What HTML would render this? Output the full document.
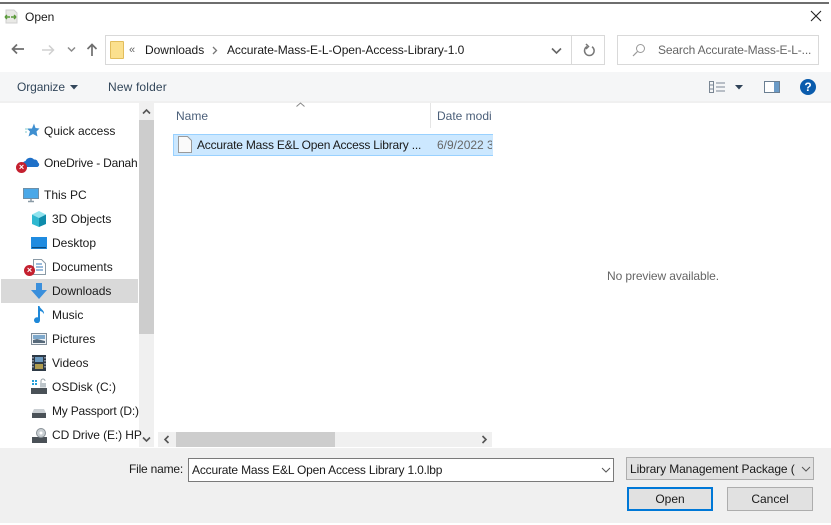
<!DOCTYPE html>
<html><head><meta charset="utf-8"><style>
html,body{margin:0;padding:0;background:#fff}
#r{position:relative;width:831px;height:525px;overflow:hidden;background:#fff;font-family:"Liberation Sans",sans-serif;font-size:12px;color:#1a1a1a}
#r div,#r svg{position:absolute}
.t{white-space:nowrap;line-height:16px;height:16px}
</style></head><body><div id="r">
<div style="left:0;top:2px;width:829px;height:2px;background:#6e6e6e"></div>
<svg style="left:3px;top:8px" width="16" height="17" viewBox="0 0 16 17"><path d="M3 2h8l3 3v10H3z" fill="#e9e9e6" stroke="#cfcfcf"/><path d="M2 9h5M2 9l2-2M2 9l2 2" stroke="#5a9a3a" stroke-width="1.4" fill="none"/><path d="M13 9H8M13 9l-2-2M13 9l-2 2" stroke="#5a9a3a" stroke-width="1.4" fill="none"/></svg>
<div class="t" style="left:25px;top:9px">Open</div>
<svg style="left:810px;top:10px" width="12" height="12" viewBox="0 0 12 12"><path d="M1 1l10 10M11 1L1 11" stroke="#222" stroke-width="1.1" fill="none"/></svg>

<svg style="left:11px;top:42px" width="14" height="14" viewBox="0 0 14 14"><path d="M13 7H2M6 2.500L1.500 7L6 11.500" stroke="#6e6e6e" stroke-width="1.700" fill="none"/></svg>
<svg style="left:41px;top:43px" width="14" height="14" viewBox="0 0 14 14"><path d="M1 7h11M8 2.500L12.500 7L8 11.500" stroke="#d0d0d0" stroke-width="1.500" fill="none"/></svg>
<svg style="left:67px;top:46px" width="9" height="7" viewBox="0 0 9 7"><path d="M1 1.500L4.500 5L8 1.500" stroke="#8a8a8a" stroke-width="1.500" fill="none"/></svg>
<svg style="left:85px;top:43px" width="14" height="14" viewBox="0 0 14 14"><path d="M7 13V2M2.500 6L7 1.500L11.500 6" stroke="#6e6e6e" stroke-width="1.700" fill="none"/></svg>

<div style="left:105px;top:35px;width:498px;height:28px;border:1px solid #d9d9d9"></div>
<div style="left:571px;top:36px;width:1px;height:28px;background:#d9d9d9"></div>
<div style="left:110px;top:41px;width:12px;height:16px;background:#fbe08e;border:1px solid #e2bd5c;border-radius:1px"></div>
<div class="t" style="left:129px;top:42px;color:#666;font-size:11px">«</div>
<div class="t" style="left:145px;top:42px;letter-spacing:-.02px">Downloads</div>
<svg style="left:212px;top:46px" width="6" height="9" viewBox="0 0 6 9"><path d="M1 1l3.500 3.500L1 8" stroke="#777" stroke-width="1.300" fill="none"/></svg>
<div class="t" style="left:227px;top:42px;letter-spacing:-.07px">Accurate-Mass-E-L-Open-Access-Library-1.0</div>
<svg style="left:551px;top:47px" width="11" height="8" viewBox="0 0 11 8"><path d="M1 1.500L5.500 6L10 1.500" stroke="#666" stroke-width="1.600" fill="none"/></svg>
<svg style="left:583px;top:43px" width="13" height="15" viewBox="0 0 13 15"><path d="M4 3.500a4.800 4.800 0 1 0 5 .2M3 1l2.500 2.500L3 6" stroke="#777" stroke-width="1.500" fill="none"/></svg>

<div style="left:617px;top:35px;width:200px;height:28px;border:1px solid #d9d9d9"></div>
<svg style="left:632px;top:43px" width="14" height="14" viewBox="0 0 14 14"><circle cx="8.500" cy="5.500" r="4" stroke="#999" fill="none"/><path d="M5.500 8.500L1 13" stroke="#999" stroke-width="1.200"/></svg>
<div class="t" style="left:658px;top:42px;color:#666;letter-spacing:-.15px">Search Accurate-Mass-E-L-...</div>

<div style="left:0;top:72px;width:831px;height:29px;background:#f5f6f7"></div>
<div style="left:0;top:101px;width:831px;height:2px;background:#f0f0f0"></div>
<div class="t" style="left:17px;top:79px;color:#33475b;letter-spacing:-.1px">Organize</div>
<svg style="left:70px;top:85px" width="8" height="5" viewBox="0 0 8 5"><path d="M0 0h8L4 4.500z" fill="#33475b"/></svg>
<div class="t" style="left:108px;top:79px;color:#33475b;letter-spacing:.15px">New folder</div>
<svg style="left:709px;top:81px" width="17" height="12" viewBox="0 0 17 12"><path d="M.5.500h4v11h-4zM.5 4h4M.5 8h4M7 2h9M7 6h9M7 10h9" stroke="#7b8794" fill="none"/></svg>
<svg style="left:735px;top:85px" width="8" height="5" viewBox="0 0 8 5"><path d="M0 0h8L4 4.500z" fill="#2f4358"/></svg>
<svg style="left:764px;top:81px" width="16" height="12" viewBox="0 0 16 12"><rect x=".5" y=".5" width="15" height="11" fill="#fff" stroke="#6b7f92"/><rect x="10" y="1" width="5" height="10" fill="#6b9bc7"/></svg>
<div style="left:800px;top:79px;width:16px;height:16px;border-radius:50%;background:#0b5cad;color:#fff;font:bold 12px/16px 'Liberation Sans',sans-serif;text-align:center">?</div>

<!-- sidebar -->
<div style="left:1px;top:279px;width:137px;height:24px;background:#d9d9d9"></div>
<div style="left:139px;top:103px;width:15px;height:344px;background:#f0f0f0"></div>
<div style="left:139px;top:120px;width:15px;height:214px;background:#cdcdcd"></div>
<svg style="left:142px;top:108px" width="9" height="7" viewBox="0 0 9 7"><path d="M1 5.500L4.500 2L8 5.500" stroke="#555" stroke-width="1.600" fill="none"/></svg>
<svg style="left:142px;top:436px" width="9" height="7" viewBox="0 0 9 7"><path d="M1 1.500L4.500 5L8 1.500" stroke="#555" stroke-width="1.600" fill="none"/></svg>

<svg style="left:25px;top:123px" width="15" height="15" viewBox="0 0 15 15"><path d="M9 .5l1.500 4.500 4 .5-3 3 1 5-4.500-2.500-4.500 2.500 1.500-5-3-3h5z" fill="#3f8fd0"/><path d="M0 6h3M0 9h2" stroke="#8cc" /></svg>
<div class="t" style="left:44px;top:123px">Quick access</div>

<svg style="left:23px;top:156px" width="17" height="12" viewBox="0 0 17 12"><path d="M3 11a3 3 0 0 1-.500-6A5 5 0 0 1 11 3.500a3.500 3.500 0 0 1 4 3A2.500 2.500 0 0 1 14.500 11z" fill="#1e70c8"/></svg>
<div style="left:16px;top:162px;width:11px;height:11px;border-radius:50%;background:#c4202f;color:#fff;font:bold 9px/10px 'Liberation Sans',sans-serif;text-align:center">×</div>
<div class="t" style="left:44px;top:155px;letter-spacing:-.2px">OneDrive - Danah</div>

<svg style="left:23px;top:188px" width="16" height="15" viewBox="0 0 16 15"><rect x=".5" y=".5" width="15" height="10" fill="#4aa8e8" stroke="#6d8fa8"/><path d="M5 13.500h6M8 11v2" stroke="#8a9aa6" stroke-width="1.500"/></svg>
<div class="t" style="left:44px;top:187px">This PC</div>

<svg style="left:31px;top:211px" width="16" height="16" viewBox="0 0 16 16"><path d="M8 0l7 3.500-7 3.500-7-3.500z" fill="#8fe3ee"/><path d="M1 3.500L8 7v9l-7-3z" fill="#2fb8d0"/><path d="M15 3.500L8 7v9l7-3z" fill="#0f8cab"/></svg>
<div class="t" style="left:52px;top:211px">3D Objects</div>

<svg style="left:31px;top:237px" width="16" height="12" viewBox="0 0 16 12"><rect width="16" height="12" fill="#1f8be0"/><rect x="1" y="10" width="14" height="1.200" fill="#0c4a7c"/></svg>
<div class="t" style="left:52px;top:235px">Desktop</div>

<svg style="left:33px;top:259px" width="13" height="16" viewBox="0 0 13 16"><path d="M.5.500h8l4 4v11H.5z" fill="#fff" stroke="#8a9aa6"/><path d="M3 5h6M3 8h7M3 11h7" stroke="#3a78b8"/></svg>
<div style="left:24px;top:265px;width:11px;height:11px;border-radius:50%;background:#c4202f;color:#fff;font:bold 9px/10px 'Liberation Sans',sans-serif;text-align:center">×</div>
<div class="t" style="left:52px;top:259px">Documents</div>

<svg style="left:31px;top:283px" width="16" height="16" viewBox="0 0 16 16"><path d="M5 0h6v7h5l-8 9-8-9h5z" fill="#3a8fdc"/></svg>
<div class="t" style="left:52px;top:283px">Downloads</div>

<svg style="left:33px;top:306px" width="12" height="17" viewBox="0 0 12 17"><path d="M5 0h1.500c.5 3 5 4 4.500 8-1-2-3-3-4-3v9a3 3 0 1 1-2-2.600z" fill="#1e88d8"/></svg>
<div class="t" style="left:52px;top:307px">Music</div>

<svg style="left:31px;top:333px" width="16" height="12" viewBox="0 0 16 12"><rect x=".5" y=".5" width="15" height="11" fill="#eef2f5" stroke="#7f8c98"/><rect x="2" y="2" width="12" height="4" fill="#7fa9cc"/><path d="M2 10V7l4-1 8 2v2z" fill="#56697a"/></svg>
<div class="t" style="left:52px;top:331px">Pictures</div>

<svg style="left:32px;top:355px" width="14" height="16" viewBox="0 0 14 16"><rect width="14" height="16" fill="#2e3a46"/><rect x="3" y="2" width="8" height="5" fill="#6c9ac0"/><rect x="3" y="9" width="8" height="5" fill="#b09c4e"/><path d="M1 2v12M13 2v12" stroke="#dde" stroke-dasharray="1.500 1.500"/></svg>
<div class="t" style="left:52px;top:355px">Videos</div>

<svg style="left:31px;top:378px" width="16" height="16" viewBox="0 0 16 16"><rect y="10" width="16" height="6" fill="#4a5157"/><rect x="9" y="5" width="6" height="4.500" fill="#bdc5ca"/><path d="M10 5V3a2 2 0 0 1 4 0" stroke="#9aa3a9" fill="none"/><path d="M1 2h2v2H1zM4 2h2v2H4zM1 5h2v2H1zM4 5h2v2H4z" fill="#27a0d8"/></svg>
<div class="t" style="left:52px;top:379px">OSDisk (C:)</div>

<svg style="left:32px;top:409px" width="14" height="9" viewBox="0 0 14 9"><path d="M2 0h10l2 4H0z" fill="#c9ced2"/><rect y="4" width="14" height="5" fill="#4a5157"/></svg>
<div class="t" style="left:52px;top:403px;letter-spacing:-.2px">My Passport (D:)</div>

<svg style="left:32px;top:428px" width="15" height="15" viewBox="0 0 15 15"><rect y="9" width="15" height="6" fill="#4a5157"/><circle cx="9" cy="5" r="4.500" fill="#c8ced2" stroke="#8a9298"/><circle cx="9" cy="5" r="1.500" fill="#fff"/></svg>
<div class="t" style="left:52px;top:427px;letter-spacing:-.1px">CD Drive (E:) HP</div>

<!-- header -->
<div class="t" style="left:176px;top:108px;color:#4c607a">Name</div>
<svg style="left:296px;top:102px" width="9" height="5" viewBox="0 0 9 5"><path d="M.5 4.500L4.500 1l4 3.500" stroke="#888" fill="none"/></svg>
<div style="left:430px;top:103px;width:1px;height:25px;background:#e5e5e5"></div>
<div class="t" style="left:437px;top:108px;width:55px;overflow:hidden;color:#4c607a">Date modi</div>

<div style="left:173px;top:134px;width:319px;height:20px;background:#cce8ff;border:1px solid #99d1ff;border-right:0"></div>
<svg style="left:178px;top:136px" width="14" height="17" viewBox="0 0 14 17"><path d="M.5.500h9l4 4v12H.500z" fill="#fafafa" stroke="#9a9a9a"/></svg>
<div class="t" style="left:197px;top:137px;letter-spacing:-.2px">Accurate Mass E&amp;L Open Access Library ...</div>
<div class="t" style="left:437px;top:137px;width:55px;overflow:hidden;color:#666">6/9/2022 3:</div>

<!-- h scrollbar -->
<div style="left:158px;top:432px;width:334px;height:15px;background:#f0f0f0"></div>
<div style="left:176px;top:432px;width:159px;height:15px;background:#cdcdcd"></div>
<svg style="left:163px;top:435px" width="7" height="9" viewBox="0 0 7 9"><path d="M5.500 1L2 4.500 5.500 8" stroke="#555" stroke-width="1.600" fill="none"/></svg>
<svg style="left:481px;top:435px" width="7" height="9" viewBox="0 0 7 9"><path d="M1.500 1L5 4.500 1.500 8" stroke="#555" stroke-width="1.600" fill="none"/></svg>

<div class="t" style="left:607px;top:268px;color:#666;letter-spacing:-.1px">No preview available.</div>

<!-- bottom -->
<div style="left:0;top:448px;width:831px;height:75px;background:#f0f0f0"></div>
<div class="t" style="left:129px;top:461px;letter-spacing:-.2px">File name:</div>
<div style="left:188px;top:458px;width:424px;height:22px;background:#fff;border:1px solid #7a7a7a"></div>
<div class="t" style="left:192px;top:462px;letter-spacing:-.18px">Accurate Mass E&amp;L Open Access Library 1.0.lbp</div>
<svg style="left:601px;top:467px" width="10" height="6" viewBox="0 0 10 6"><path d="M1 1l4 4 4-4" stroke="#555" fill="none"/></svg>
<div style="left:626px;top:457px;width:186px;height:21px;background:#e1e1e1;border:1px solid #adadad"></div>
<div class="t" style="left:630px;top:461px;letter-spacing:-.1px">Library Management Package (</div>
<svg style="left:801px;top:466px" width="10" height="6" viewBox="0 0 10 6"><path d="M1 1l4 4 4-4" stroke="#555" fill="none"/></svg>
<div style="left:627px;top:487px;width:82px;height:20px;background:#e1e1e1;border:2px solid #0078d7;text-align:center;line-height:20px">Open</div>
<div style="left:727px;top:487px;width:84px;height:22px;background:#e1e1e1;border:1px solid #adadad;text-align:center;line-height:22px">Cancel</div>
</div></body></html>
